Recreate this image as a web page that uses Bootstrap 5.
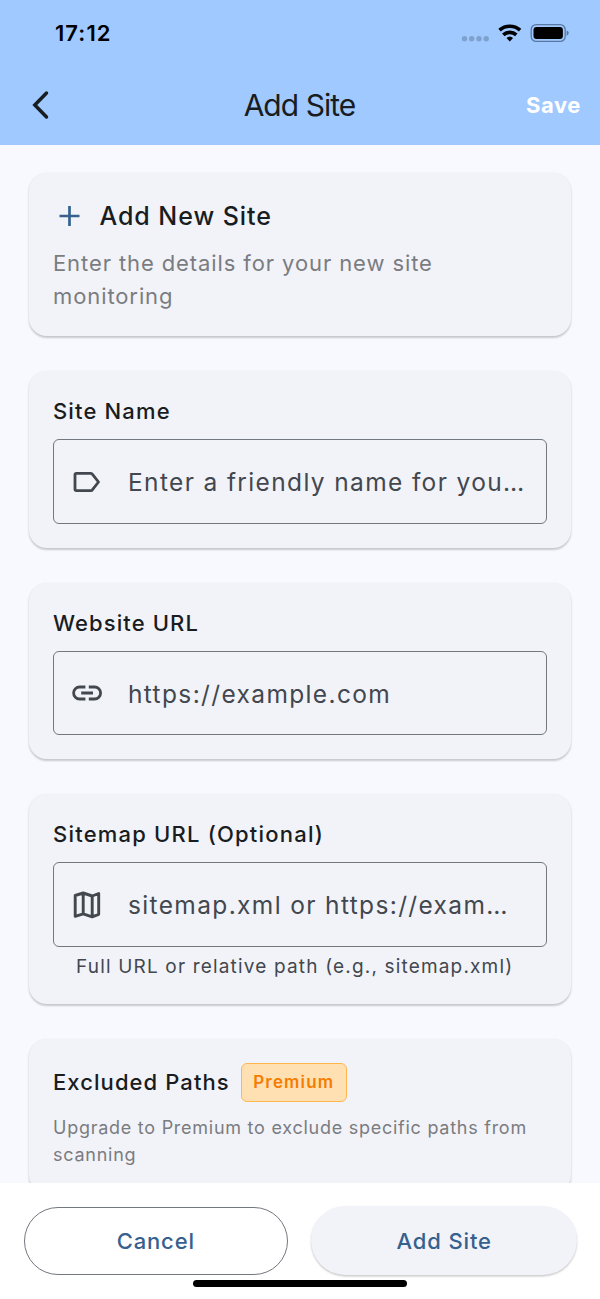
<!DOCTYPE html>
<html lang="en">
<head>
<meta charset="utf-8">
<meta name="viewport" content="width=device-width, initial-scale=1">
<title>Add Site</title>
<link href="https://cdn.jsdelivr.net/npm/bootstrap@5.3.0/dist/css/bootstrap.min.css" rel="stylesheet">
<style>
  body { font-family: Inter, "Liberation Sans", sans-serif; background: #f8f9ff; color: #191c20; height: 1299px; font-size: 22px; }
  .app-header { background: #a0c9ff; height: 145px; }
  .status-bar { height: 66px; padding: 0 31px 0 55px; }
  .clock { font-size: 22px; font-weight: 600; letter-spacing: 1.05px; color: #000; }
  .title-bar { height: 77px; padding: 0 19px 0 29px; }
  .title-bar h1 { font-size: 30px; letter-spacing: -.96px; line-height: 36px; }
  .save-btn { font-size: 22px; font-weight: 700; letter-spacing: .6px; color: #fff; line-height: 32px; }
  .side { width: 90px; padding-top: 2px; }
  .side-start { width: 79px; }
  .content { padding: 28px 29px 0; gap: 34.7px; min-height: 0; }
  .panel { background: #f1f3f9; border: 0; border-radius: 18px; padding: 24px; box-shadow: 0 1.5px 2px rgba(0,0,0,.17), 0 1px 3px rgba(0,0,0,.06); flex: none; }
  .panel-head { font-size: 25px; font-weight: 500; letter-spacing: .94px; line-height: 39px; }
  .intro { color: #7b7c80; font-size: 22px; letter-spacing: .9px; line-height: 33px; margin-top: 11px; }
  .field-label { font-size: 22px; font-weight: 500; letter-spacing: 1.15px; line-height: 32px; margin-bottom: 12.5px; }
  .field { height: 85px; border: 1.5px solid #73777f; border-radius: 6px; padding: 0 22px 0 17px; gap: 24px; color: #43474e; font-size: 24.5px; letter-spacing: 1.36px; background: none; }
  .field svg { flex: none; }
  .field span { padding-top: 2px; }
  .helper { font-size: 19px; letter-spacing: 1.17px; line-height: 26px; color: #43474e; padding-left: 23px; margin-top: 7px; }
  .premium { font-size: 17px; font-weight: 600; letter-spacing: 1.15px; color: #f57c00; background: #ffe0b2; border: 1.5px solid #ffb74d; border-radius: 6px; height: 39px; padding: 1px 11.5px 0; margin-left: 11px; }
  .note { font-size: 18px; letter-spacing: .74px; line-height: 27.5px; color: #7b7c80; margin-top: 12px; }
  .action-bar { background: #fff; height: 116px; padding: 23px 23px 0 23.5px; gap: 22.5px; }
  .pill { border-radius: 35px; font-size: 22px; font-weight: 500; color: #36618e; letter-spacing: .86px; padding: 1px 0 0; }
  .pill-outline { border: 1.5px solid #73777f; width: 264.5px; height: 68px; margin-top: .5px; }
  .pill-fill { background: #f1f3f9; border: 0; height: 69px; padding-left: 1px; box-shadow: 0 1.5px 2px rgba(0,0,0,.17), 0 1px 3px rgba(0,0,0,.06); }
  .home-bar { width: 214px; height: 7px; border-radius: 4px; background: #000; left: 193px; bottom: 12px; }
</style>
</head>
<body class="d-flex flex-column overflow-hidden position-relative">
<header class="app-header flex-shrink-0">
  <div class="status-bar d-flex align-items-center justify-content-between">
    <span class="clock">17:12</span>
    <svg width="108" height="22" viewBox="0 0 108 22">
      <g fill="#7fa1cd"><circle cx="3.5" cy="16.7" r="2.7"/><circle cx="10.7" cy="16.7" r="2.7"/><circle cx="18" cy="16.7" r="2.7"/><circle cx="25.2" cy="16.7" r="2.7"/></g>
      <g fill="none" stroke="#000" stroke-width="3.6">
        <path d="M38.500 8.200a15.500 15.500 0 0 1 20.600 0"/>
        <path d="M42.300 12.900a9.500 9.500 0 0 1 13 0"/>
      </g>
      <path d="M48.800 19.500l-3.300-3.400a4.800 4.800 0 0 1 6.600 0z" fill="#000"/>
      <rect x="70.200" y="2.600" width="34" height="16.800" rx="5" fill="none" stroke="#5878a3" stroke-width="1.300"/>
      <rect x="72.500" y="5" width="29.400" height="12" rx="3" fill="#000"/>
      <path d="M105.600 8.500c2.800 1 2.800 4.200 0 5.200z" fill="#5878a3"/>
    </svg>
  </div>
  <div class="title-bar d-flex align-items-center justify-content-between">
    <div class="side-start">
      <svg class="d-block" width="24" height="32" viewBox="0 0 24 32" fill="none" stroke="#191c20" stroke-width="3.500" stroke-linecap="round"><path d="M17.500 4L5.800 16l11.700 12"/></svg>
    </div>
    <h1 class="m-0 fw-normal">Add Site</h1>
    <div class="side text-end"><a class="save-btn text-decoration-none" href="#">Save</a></div>
  </div>
</header>

<main class="content d-flex flex-column flex-grow-1 overflow-hidden">
  <section class="card panel" style="height:163.3px">
    <div class="d-flex align-items-center panel-head">
      <svg class="me-2" width="38.5" height="37" viewBox="0 0 38.5 37"><path d="M16.500 8v20M6.500 18h20" stroke="#36618e" stroke-width="2.700" fill="none"/></svg>
      <span>Add New Site</span>
    </div>
    <p class="intro mb-0">Enter the details for your new site monitoring</p>
  </section>

  <section class="card panel" style="height:177px">
    <div class="field-label">Site Name</div>
    <div class="form-control field d-flex align-items-center">
      <svg width="33" height="36" viewBox="0 0 33 36" fill="none" stroke="#43474e" stroke-width="2.800" stroke-linejoin="round"><path d="M5.200 9.400h14.600a2 2 0 0 1 1.700.9l6 7.700-6 7.700a2 2 0 0 1-1.700.9H5.200a1.200 1.200 0 0 1-1.200-1.200V10.600a1.200 1.200 0 0 1 1.200-1.200z"/></svg>
      <span class="text-nowrap">Enter a friendly name for you…</span>
    </div>
  </section>

  <section class="card panel" style="height:176.5px">
    <div class="field-label" style="letter-spacing:1.1px">Website URL</div>
    <div class="form-control field d-flex align-items-center">
      <svg width="33" height="36" viewBox="0 0 33 36" fill="none" stroke="#43474e" stroke-width="2.800"><path d="M14.400 12H8.600a6 6 0 0 0 0 12h5.800M17.800 12h5.800a6 6 0 0 1 0 12h-5.800M10.200 18H22"/></svg>
      <span class="text-nowrap">https://example.com</span>
    </div>
  </section>

  <section class="card panel" style="height:210px">
    <div class="field-label" style="letter-spacing:1.2px">Sitemap URL (Optional)</div>
    <div class="form-control field d-flex align-items-center">
      <svg width="33" height="36" viewBox="0 0 33 36" fill="none" stroke="#43474e" stroke-width="2.900" stroke-linejoin="round"><path d="M4.200 8.500l8-2.500 9 3 6.500-2.500v20.800l-6.500 2.500-9-3-8 2.500zM12.200 6v20.800M21.200 9v20.800"/></svg>
      <span class="text-nowrap">sitemap.xml or https://exam…</span>
    </div>
    <div class="helper">Full URL or relative path (e.g., sitemap.xml)</div>
  </section>

  <section class="card panel">
    <div class="d-flex align-items-center">
      <span class="field-label mb-0" style="letter-spacing:1.08px">Excluded Paths</span>
      <span class="premium d-flex align-items-center">Premium</span>
    </div>
    <p class="note mb-0">Upgrade to Premium to exclude specific paths from scanning</p>
  </section>
</main>

<footer class="action-bar d-flex flex-shrink-0">
  <button class="btn pill pill-outline">Cancel</button>
  <button class="btn pill pill-fill flex-grow-1">Add Site</button>
</footer>
<div class="home-bar position-absolute"></div>
<script src="https://cdn.jsdelivr.net/npm/bootstrap@5.3.0/dist/js/bootstrap.bundle.min.js"></script>
</body>
</html>
